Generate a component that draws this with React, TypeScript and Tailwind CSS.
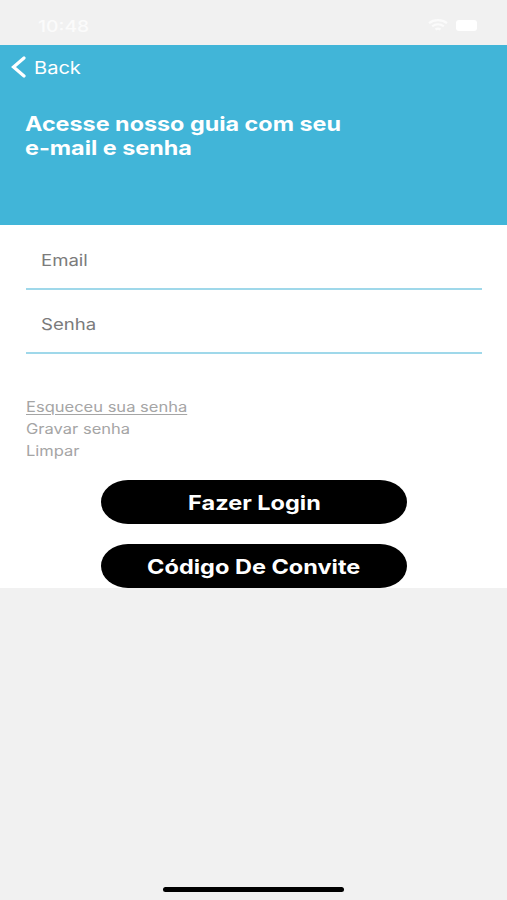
import type { ReactNode } from 'react'
import clsx from 'clsx'

const links = [
  { label: 'Esqueceu sua senha', className: 'underline underline-offset-2 decoration-1 scale-x-[1.18]' },
  { label: 'Gravar senha', className: 'scale-x-[1.18]' },
  { label: 'Limpar', className: 'scale-x-[1.18]' },
]

function Wide({ children, className }: { children: ReactNode; className?: string }) {
  return <span className={clsx('inline-block whitespace-nowrap', className)}>{children}</span>
}

function StatusBar() {
  return (
    <div className="h-[45px] shrink-0 flex items-start justify-between pt-[18px] pl-[38px] pr-[30px] text-[#fbfbfb]">
      <Wide className="origin-left scale-x-[1.21] text-[16px] leading-4 font-medium">10:48</Wide>
      <div className="flex items-center gap-2 pt-px">
        <svg width="20" height="13" viewBox="0 0 20 13" fill="none" stroke="currentColor" strokeWidth="2.2">
          <path d="M1 4.2C6 .2 14 .2 19 4.2" />
          <path d="M4.2 7.4c3.4-2.6 8.2-2.6 11.6 0" />
          <path d="M7.5 10.5c1.500-1.100 3.500-1.100 5 0" />
        </svg>
        <div className="w-[21px] h-[11px] rounded-[3px] bg-white" />
      </div>
    </div>
  )
}

function Field({ label, type }: { label: string; type: string }) {
  return (
    <label className="relative block h-16 border-b-2 border-[#9fd8ea]">
      <Wide className="absolute left-[15px] top-[22px] origin-left scale-x-[1.16] text-base leading-6 text-[#7b7b7b]">
        {label}
      </Wide>
      <input type={type} aria-label={label} className="w-full h-full bg-transparent outline-none" />
    </label>
  )
}

function PillButton({ children }: { children: ReactNode }) {
  return (
    <button className="w-[306px] h-11 flex items-center justify-center pt-px bg-black text-white rounded-[27px/22px]">
      <Wide className="scale-x-[1.175] text-xl leading-6 font-bold">{children}</Wide>
    </button>
  )
}

export default function App() {
  return (
    <div className="h-[900px] flex flex-col bg-[#f1f1f1] overflow-hidden font-['Inter',sans-serif]">
      <StatusBar />

      <header className="h-[180px] shrink-0 bg-[#41b5d8] text-white">
        <button className="flex items-center h-[44px] pl-[11px] gap-2">
          <svg width="15" height="22" viewBox="0 0 15 22" fill="none" stroke="currentColor" strokeWidth="3.2" strokeLinecap="round">
            <path d="M13 2 2.5 11 13 20" />
          </svg>
          <Wide className="origin-left scale-x-[1.18] pt-px text-[17px] leading-6">Back</Wide>
        </button>
        <h1 className="mt-[24px] pl-[25px] text-xl leading-[23.5px] font-bold">
          <Wide className="origin-left scale-x-[1.167]">
            Acesse nosso guia com seu
            <br />
            e-mail e senha
          </Wide>
        </h1>
      </header>

      <main className="h-[363px] shrink-0 bg-white">
        <form className="pl-[26px] pr-[25px] pt-px text-base" onSubmit={(e) => e.preventDefault()}>
          <Field label="Email" type="email" />
          <Field label="Senha" type="password" />
        </form>
        <ul className="mt-[42px] pl-[26px] text-sm leading-[22px] text-[#a5a5a5]">
          {links.map((link) => (
            <li key={link.label} className="h-[22px]">
              <Wide className={clsx('origin-left', link.className)}>{link.label}</Wide>
            </li>
          ))}
        </ul>
        <div className="mt-[18px] flex flex-col items-center gap-5 pl-px">
          <PillButton>Fazer Login</PillButton>
          <PillButton>Código De Convite</PillButton>
        </div>
      </main>

      <div className="mt-auto mb-2 mx-auto w-[181px] h-[5px] shrink-0 rounded-full bg-black" />
    </div>
  )
}
